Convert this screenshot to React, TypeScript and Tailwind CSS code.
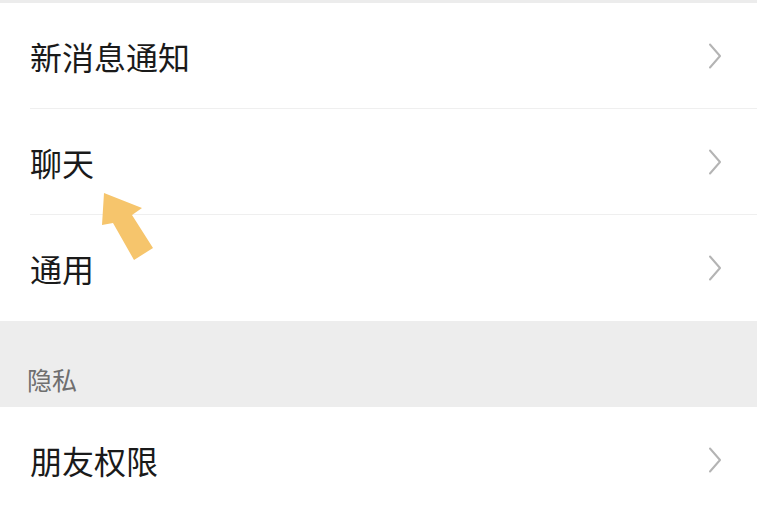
import React from "react";

const Chevron = () => (
  <svg width="14" height="26" viewBox="0 0 14 26" className="shrink-0">
    <path d="M2 1.5 L12 13 L2 24.5" fill="none" stroke="#b4b4b4" strokeWidth="2" strokeLinecap="round" strokeLinejoin="round" />
  </svg>
);

const Row = ({ label, divider }: { label: string; divider?: boolean }) => (
  <div className="relative flex h-[106px] items-center justify-between bg-white pl-[30px] pr-[35px]">
    <span className="text-[32px] leading-none text-[#1a1a1a]">{label}</span>
    <Chevron />
    {divider && <div className="absolute bottom-0 left-[30px] right-0 h-px bg-[#efefef]" />}
  </div>
);

export default function App() {
  return (
    <div
      className="relative h-[507px] w-[762px] overflow-hidden bg-white"
      style={{ fontFamily: '"Noto Sans CJK SC", "Noto Sans", sans-serif' }}
    >
      <div className="w-[757px]">
        <div className="h-[3px] bg-[#ececec]" />
        <Row label="新消息通知" divider />
        <Row label="聊天" divider />
        <Row label="通用" />
        <div className="flex h-[86px] items-end bg-[#ededed] pb-[15px] pl-[27px]">
          <span className="text-[25px] leading-none text-[#6f6f6f]">隐私</span>
        </div>
        <Row label="朋友权限" />
      </div>
      <svg className="absolute left-0 top-0" width="762" height="507" viewBox="0 0 762 507">
        <polygon
          points="104,193 142,208 132,215 153,248 134,260 113,223 102,225"
          fill="#f6c56c"
        />
      </svg>
    </div>
  );
}
